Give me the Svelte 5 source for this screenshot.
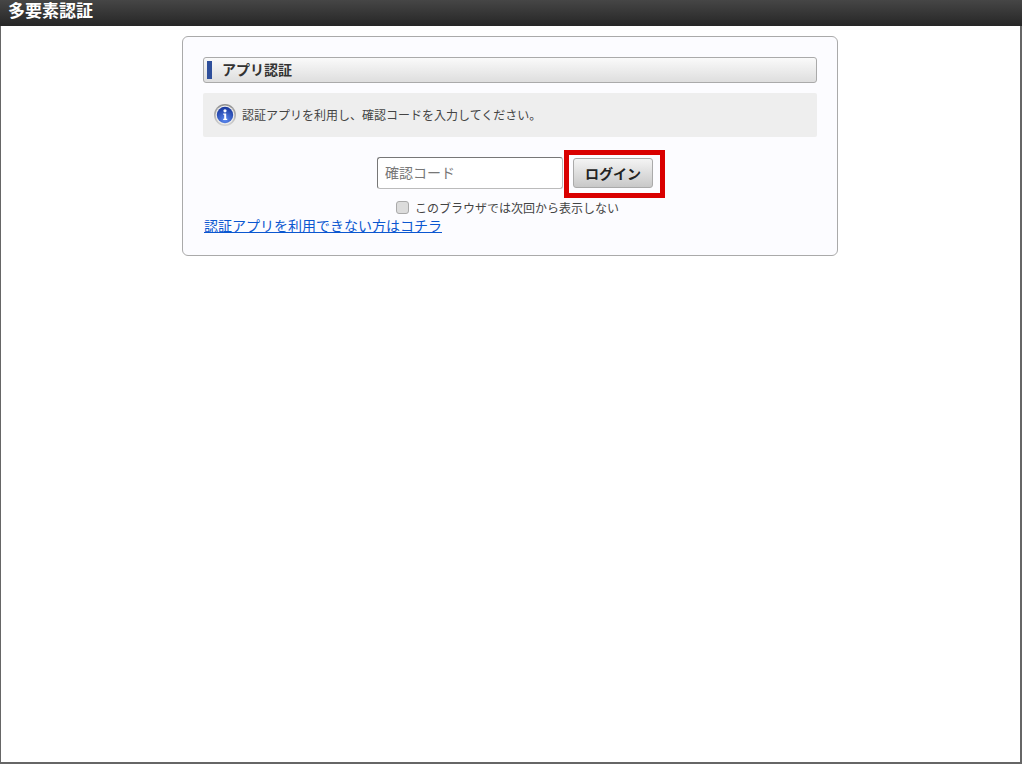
<script>
  let code = '';
  let skip = false;
</script>

<div class="frame">
  <header class="topbar">多要素認証</header>

  <main class="card">
    <h2 class="title">アプリ認証</h2>

    <div class="info">
      <svg class="info-icon" width="22" height="22" viewBox="0 0 22 22" aria-hidden="true">
        <defs>
          <linearGradient id="ring" x1="0" y1="0" x2="0" y2="1">
            <stop offset="0" stop-color="#8f8f8f" />
            <stop offset="1" stop-color="#d4d4d4" />
          </linearGradient>
          <radialGradient id="ball" cx="0.5" cy="0.8" r="0.75">
            <stop offset="0" stop-color="#5c8af0" />
            <stop offset="1" stop-color="#1a3aa0" />
          </radialGradient>
        </defs>
        <circle cx="11" cy="11" r="11" fill="url(#ring)" />
        <circle cx="11" cy="11" r="9.4" fill="#ececec" />
        <circle cx="11" cy="11" r="8.2" fill="url(#ball)" />
        <circle cx="11" cy="6.8" r="1.6" fill="#fff" />
        <path d="M9.2 9.4h3v5.4h1v1.3H9.2v-1.3h1v-4.1h-1z" fill="#fff" />
      </svg>
      <span class="info-text">認証アプリを利用し、確認コードを入力してください。</span>
    </div>

    <form class="login" on:submit|preventDefault>
      <input class="code" type="text" placeholder="確認コード" bind:value={code} />
      <div class="highlight">
        <button class="submit" type="submit">ログイン</button>
      </div>
    </form>

    <label class="remember">
      <input class="check" type="checkbox" bind:checked={skip} />
      <span>このブラウザでは次回から表示しない</span>
    </label>

    <a class="help" href="#help">認証アプリを利用できない方はコチラ</a>
  </main>
</div>

<style>
  :global(body) {
    margin: 0;
    background: #fff;
  }

  .frame {
    box-sizing: border-box;
    height: 764px;
    border-left: 1px solid #666;
    border-right: 2px solid #666;
    border-bottom: 2px solid #666;
    font-family: "Liberation Sans", "Noto Sans CJK JP", sans-serif;
    color: #333;
  }

  .topbar {
    box-sizing: border-box;
    height: 26px;
    margin-left: -1px;
    margin-right: -2px;
    padding-left: 8px;
    background: linear-gradient(#464646, #262626);
    color: #fff;
    font-size: 17px;
    font-weight: 700;
    line-height: 24px;
  }

  .card {
    box-sizing: border-box;
    width: 656px;
    height: 220px;
    margin: 10px 0 0 181px;
    padding: 20px;
    background: #fcfcff;
    border: 1px solid #aaa;
    border-radius: 6px;
  }

  .title {
    box-sizing: border-box;
    height: 26px;
    margin: 0;
    padding-left: 18px;
    background: linear-gradient(#fafafa, #dedede);
    border: 1px solid #aaa;
    border-radius: 3px;
    font-size: 14px;
    font-weight: 700;
    line-height: 24px;
    position: relative;
  }

  .title::before {
    content: "";
    position: absolute;
    left: 3px;
    top: 3px;
    bottom: 3px;
    width: 5px;
    background: #2f4f9b;
  }

  .info {
    display: flex;
    align-items: center;
    gap: 6px;
    height: 44px;
    margin-top: 10px;
    padding-left: 11px;
    background: #eee;
    border-radius: 2px;
    font-size: 12px;
    color: #444;
  }

  .info-icon {
    flex: none;
  }

  .info-text {
    margin-bottom: 2px;
  }

  .login {
    display: flex;
    align-items: center;
    height: 48px;
    margin-top: 13px;
    padding-left: 174px;
  }

  .code {
    box-sizing: border-box;
    width: 186px;
    height: 32px;
    margin-bottom: 2px;
    padding: 0 7px 1px;
    background: #fff;
    border: 1px solid #bbb;
    border-top-color: #777;
    border-left-color: #777;
    border-radius: 3px;
    font: inherit;
    font-size: 14px;
    outline: none;
  }

  .code::placeholder {
    color: #777;
  }

  .highlight {
    box-sizing: border-box;
    width: 101px;
    height: 48px;
    margin-left: 1px;
    padding: 3px 3px 3px 4px;
    border: 5px solid #d90000;
  }

  .submit {
    display: block;
    box-sizing: border-box;
    width: 80px;
    height: 30px;
    padding: 0;
    background: linear-gradient(#f4f4f4, #c8c8c8);
    border: 1px solid #aaa;
    border-radius: 3px;
    font: inherit;
    font-size: 14px;
    font-weight: 700;
    color: #222;
  }

  .remember {
    display: flex;
    align-items: center;
    justify-content: center;
    gap: 6px;
    height: 18px;
    padding-right: 5px;
    font-size: 12px;
    color: #444;
  }

  .check {
    box-sizing: border-box;
    appearance: none;
    width: 13px;
    height: 13px;
    margin: 0;
    background: #dcdcdc;
    border: 1px solid #aaa;
    border-radius: 3px;
  }

  .help {
    display: block;
    width: fit-content;
    margin-top: 1px;
    margin-left: 1px;
    font-size: 14px;
    line-height: 19px;
    color: #0b57d0;
  }
</style>
